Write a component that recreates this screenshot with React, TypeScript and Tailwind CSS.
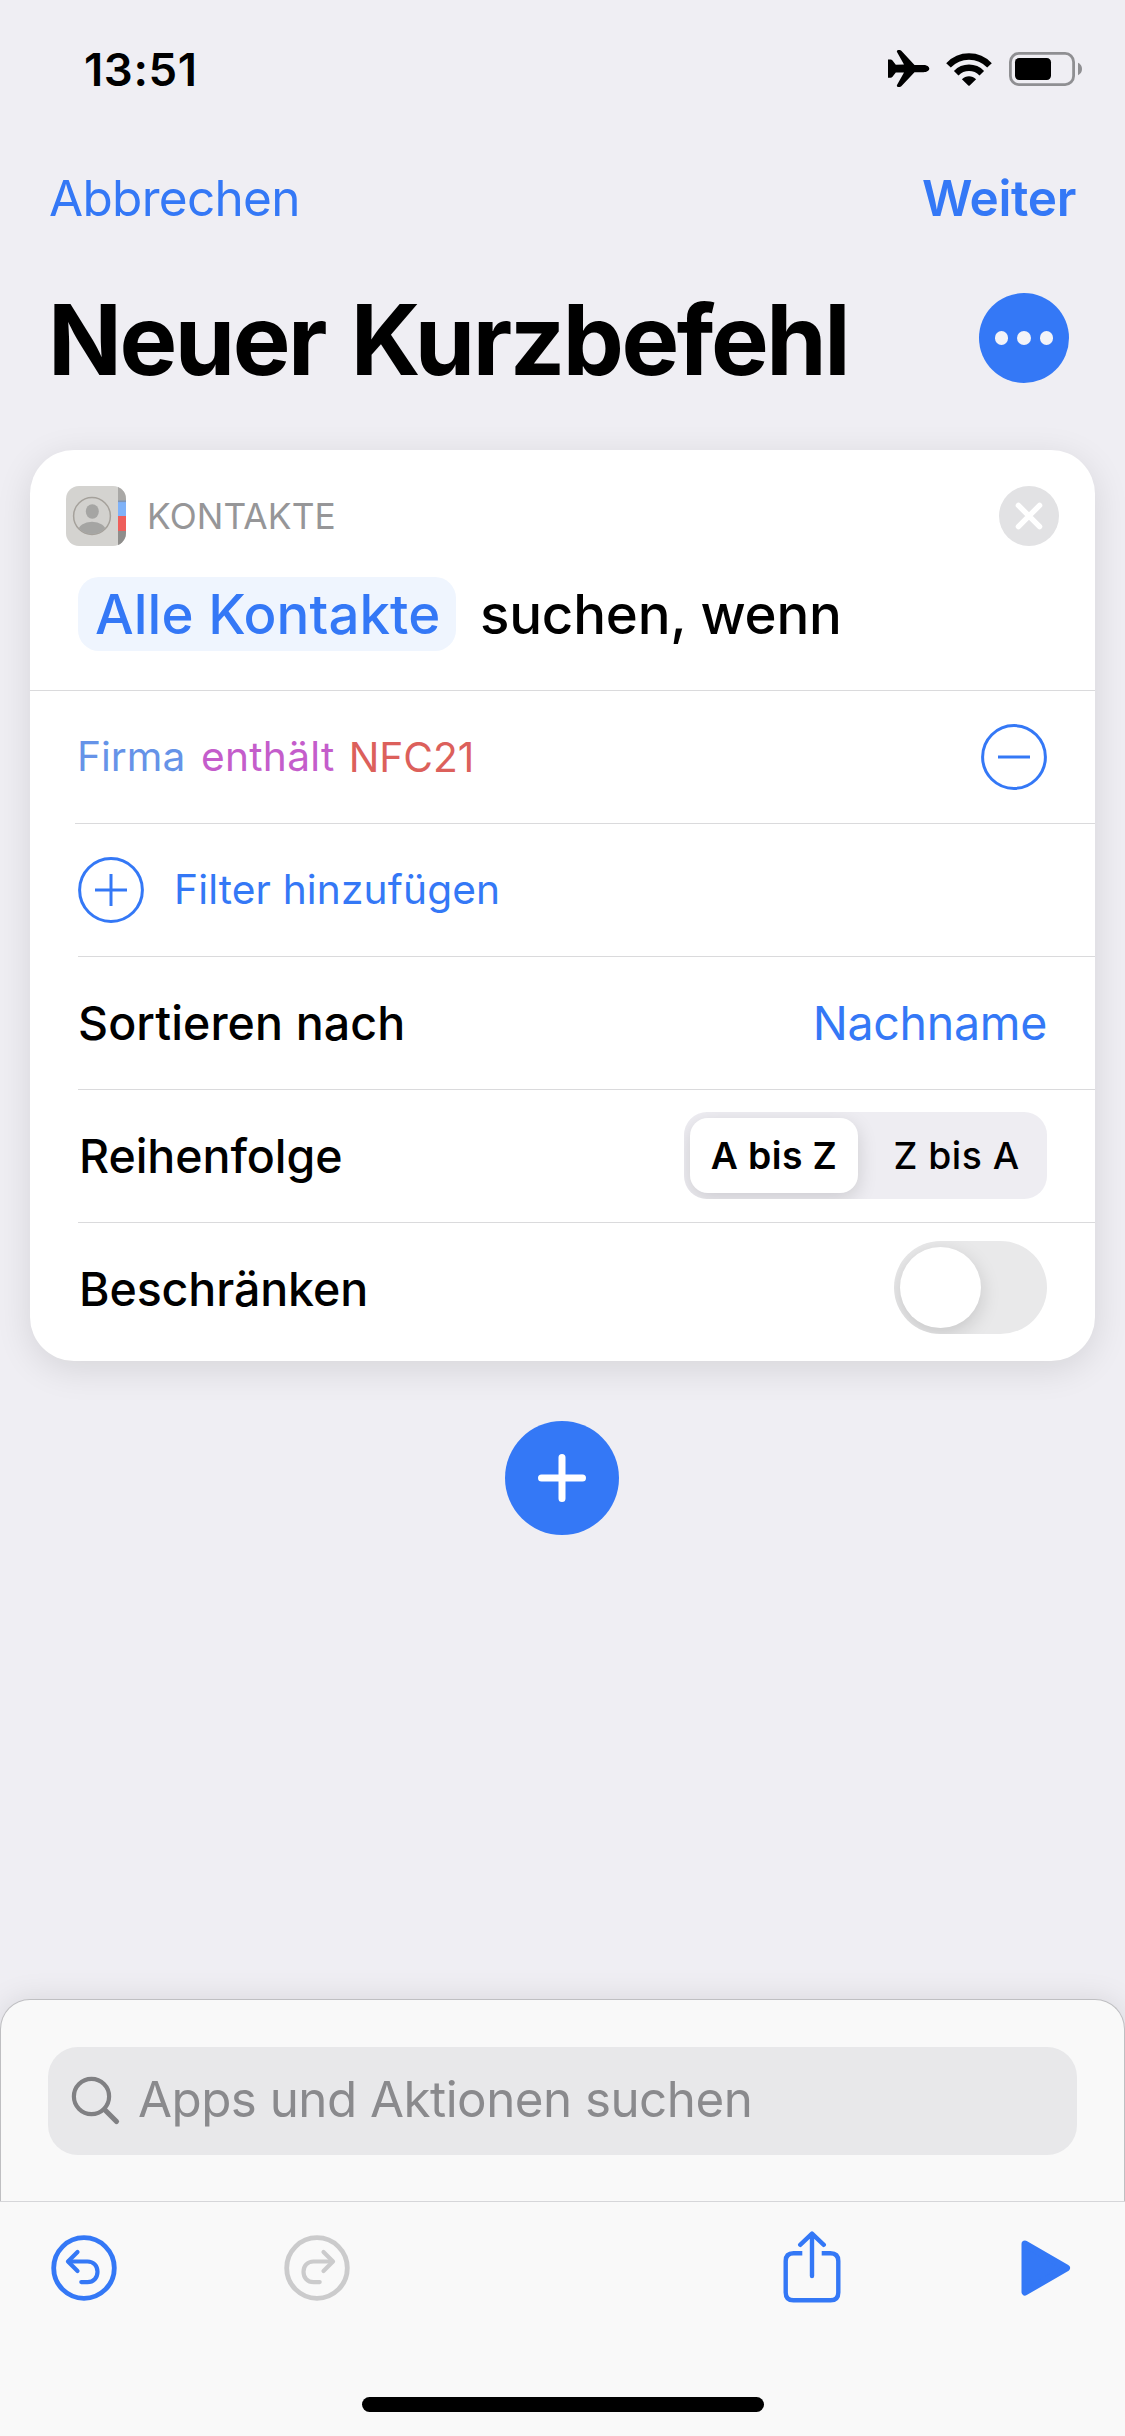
import type { ReactNode } from "react";

const BLUE = "#3478f6";

function AirplaneIcon() {
  return (
    <svg width="42" height="38" viewBox="0 0 42 38" fill="#000">
      <path d="M0 9.5 H2.6 C3.3 9.5 3.9 9.8 4.3 10.3 L7.8 14.8 L16 14.6 L9 2 C8.5 1 9.2 0 10.2 0 H11.5 C12.2 0 12.8 .3 13.3 .8 L26.5 14.9 H35.5 C39 14.9 41.3 16.6 41.3 18.6 C41.3 20.6 39 22.3 35.5 22.3 H26.5 L13.3 36.2 C12.8 36.8 12.2 37 11.5 37 H10.2 C9.2 37 8.5 36 9 35 L16 22.6 L7.8 22.4 L4.3 26.9 C3.9 27.4 3.3 27.7 2.6 27.7 H0 Z" />
    </svg>
  );
}

function WifiIcon() {
  return (
    <svg width="46" height="33" viewBox="0 0 46 33" fill="none" stroke="#000">
      <path d="M2.5 12.4 C13.8 .6 32.2 .6 43.5 12.4" strokeWidth="6.4" />
      <path d="M10.2 20.2 C17.3 13 28.7 13 35.8 20.2" strokeWidth="6.4" />
      <path d="M15.9 26.2 C19.8 22.3 26.2 22.3 30.1 26.2 L23.7 32.5 C23.3 32.9 22.7 32.9 22.3 32.5 Z" fill="#000" stroke="none" />
    </svg>
  );
}

function BatteryIcon() {
  return (
    <svg width="74" height="34" viewBox="0 0 74 34">
      <rect x="1.4" y="1.4" width="63.2" height="31.2" rx="8.5" fill="none" stroke="#8f8f92" strokeWidth="2.8" />
      <rect x="6" y="6" width="36" height="22" rx="4.2" fill="#000" />
      <path d="M69 10.8 C71.6 12 73 14.3 73 17 C73 19.7 71.6 22 69 23.2 Z" fill="#8f8f92" />
    </svg>
  );
}

function ContactsIcon() {
  return (
    <svg width="60" height="60" viewBox="0 0 60 60">
      <defs>
        <clipPath id="book">
          <rect width="60" height="60" rx="13" />
        </clipPath>
        <clipPath id="portrait">
          <circle cx="26" cy="30" r="18" />
        </clipPath>
      </defs>
      <g clipPath="url(#book)">
        <rect width="60" height="60" fill="#d4d3d0" />
        <rect x="52" width="8" height="15" fill="#a9a8a6" />
        <rect x="52" y="15" width="8" height="15.5" fill="#7fb2f8" />
        <rect x="52" y="14.5" width="8" height="1.6" fill="#7f95b5" />
        <rect x="52" y="30" width="8" height="15" fill="#ee5e5b" />
        <rect x="52" y="45" width="8" height="15" fill="#8f8e8c" />
        <circle cx="26" cy="30" r="18.4" fill="#d2d1ce" stroke="#a5a19b" strokeWidth="1.5" />
        <g clipPath="url(#portrait)" fill="#a5a5a3">
          <ellipse cx="26.3" cy="25.5" rx="6.5" ry="7.3" />
          <ellipse cx="26" cy="45.5" rx="14" ry="9.8" />
        </g>
      </g>
    </svg>
  );
}

function CircleGlyph({ plus }: { plus?: boolean }) {
  return (
    <svg width="66" height="66" viewBox="0 0 66 66" fill="none" stroke={BLUE} strokeWidth="3">
      <circle cx="33" cy="33" r="31.4" />
      <path d="M17 33 H49" />
      {plus && <path d="M33 17 V49" />}
    </svg>
  );
}

function HistoryIcon({ color, mirrored }: { color: string; mirrored?: boolean }) {
  return (
    <svg
      width="66"
      height="66"
      viewBox="0 0 66 66"
      fill="none"
      stroke={color}
      strokeLinecap="round"
      strokeLinejoin="round"
      className={mirrored ? "-scale-x-100" : ""}
    >
      <circle cx="33" cy="33" r="30.3" strokeWidth="4.8" />
      <path d="M26.5 17 L17 26.5 L26.5 36" strokeWidth="4.2" />
      <path d="M17.5 26.5 H36.5 C42.5 26.5 46.5 30.8 46.5 36.8 C46.5 42.8 42.5 47.1 36.5 47.1 H30.3" strokeWidth="4.2" />
    </svg>
  );
}

function Row({ children, inset = "ml-[48px]" }: { children: ReactNode; inset?: string }) {
  return <div className={`${inset} h-[133px] border-t border-[#dadadc]`}>{children}</div>;
}

export default function App() {
  return (
    <div className="flex h-[2436px] w-[1125px] flex-col overflow-hidden bg-[#efeef3] font-['Inter',sans-serif] leading-none text-black">
      <header className="flex h-[138px] items-center justify-between pr-[42px] pl-[84px]">
        <span className="pt-px text-[45.5px] font-semibold tracking-[0.6px]">13:51</span>
        <div className="flex items-center">
          <AirplaneIcon />
          <span className="ml-4 flex"><WifiIcon /></span>
          <span className="ml-[17px] flex"><BatteryIcon /></span>
        </div>
      </header>

      <nav className="flex h-[120px] items-center justify-between pt-px pr-[49px] pl-[49px] text-[49.5px] text-[#3478f6]">
        <button className="tracking-[-0.7px]">Abbrechen</button>
        <button className="font-semibold tracking-[-0.34px]">Weiter</button>
      </nav>

      <div className="flex h-[160px] items-center justify-between pr-[56px] pl-[48px]">
        <h1 className="pt-[2px] text-[97px] font-bold tracking-[-2.45px] [word-spacing:5px] whitespace-nowrap">Neuer Kurzbefehl</h1>
        <button className="flex size-[90px] items-center justify-center gap-[9px] rounded-full bg-[#3478f6]">
          <i className="size-[13.5px] rounded-full bg-[#f3f3f8]" />
          <i className="size-[13.5px] rounded-full bg-[#f3f3f8]" />
          <i className="size-[13.5px] rounded-full bg-[#f3f3f8]" />
        </button>
      </div>

      <section className="mx-[30px] mt-8 h-[911px] shrink-0 rounded-[44px] bg-white pt-9 shadow-[0_8px_36px_rgba(0,0,0,0.11)]">
        <div className="flex h-[60px] items-center px-9">
          <ContactsIcon />
          <span className="ml-[21px] pt-[2px] text-[35.3px] tracking-[0.12px] text-[#969698]">KONTAKTE</span>
          <button className="ml-auto flex size-[60px] items-center justify-center rounded-full bg-[#e2e2e4]">
            <svg width="30" height="30" viewBox="0 0 30 30" stroke="#fff" strokeWidth="5.4" strokeLinecap="round">
              <path d="M4.4 4.4 L25.6 25.6 M25.6 4.4 L4.4 25.6" />
            </svg>
          </button>
        </div>

        <div className="mt-[31px] mb-[39px] ml-[48px] flex h-[74px] items-center text-[54.6px] font-medium whitespace-nowrap">
          <span className="flex h-full w-[378px] items-center rounded-[21px] bg-[#eff5fe] pt-px pl-[17px] tracking-[0.06px] text-[#3478f6]">
            Alle Kontakte
          </span>
          <span className="ml-6 pt-px tracking-[-0.2px]">suchen, wenn</span>
        </div>

        <Row inset="pl-[48px]">
          <div className="flex h-[132px] items-center pr-[48px] text-[40.7px]">
            <span className="-ml-px pt-px text-[#6693e8]">Firma</span>
            <span className="ml-[15.6px] pt-px tracking-[0.28px] text-[#c45dcb]">enthält</span>
            <span className="ml-[14px] pt-[3px] text-[#dc605b]">NFC21</span>
            <span className="ml-auto"><CircleGlyph /></span>
          </div>
        </Row>
        <Row inset="ml-[45px] pl-[3px]">
          <div className="flex h-[132px] items-center text-[40.7px] text-[#3478f6]">
            <CircleGlyph plus />
            <span className="ml-[30px] tracking-[0.13px]">Filter hinzufügen</span>
          </div>
        </Row>
        <Row>
          <div className="flex h-[132px] items-center justify-between pr-[48px] text-[46.5px]">
            <span className="font-medium tracking-[0.11px]">Sortieren nach</span>
            <span className="tracking-[-0.3px] text-[#3478f6]">Nachname</span>
          </div>
        </Row>
        <Row>
          <div className="flex h-[132px] items-center justify-between pr-[48px]">
            <span className="pl-px text-[46.5px] font-medium tracking-[-0.05px]">Reihenfolge</span>
            <div className="mb-px flex h-[87px] w-[363px] overflow-hidden rounded-[23px] bg-[#eeedf2] p-[6px] text-[37.3px]">
              <span className="flex w-[168px] items-center justify-center rounded-[18px] bg-white font-semibold tracking-[0.41px] shadow-[0_6px_20px_rgba(0,0,0,0.14)]">
                A bis Z
              </span>
              <span className="flex flex-1 items-center justify-center pl-[14px] font-medium tracking-[0.48px]">Z bis A</span>
            </div>
          </div>
        </Row>
        <Row>
          <div className="flex h-[132px] items-center justify-between pr-[48px]">
            <span className="pl-px text-[46.5px] font-medium tracking-[-0.1px]">Beschränken</span>
            <span className="mb-[3px] flex h-[93px] w-[153px] items-center overflow-hidden rounded-full bg-[#e9e9ea] pl-[6px]">
              <i className="size-[81px] rounded-full bg-white shadow-[0_6px_20px_rgba(0,0,0,0.15)]" />
            </span>
          </div>
        </Row>
      </section>

      <button className="mt-[60px] mr-px flex size-[114px] shrink-0 items-center justify-center self-center rounded-full bg-[#3478f6]">
        <svg width="50" height="50" viewBox="0 0 50 50" stroke="#fff" strokeWidth="7" strokeLinecap="round">
          <path d="M4.5 25 H45.5 M25 4.5 V45.5" />
        </svg>
      </button>

      <footer className="mt-auto h-[437px] shrink-0">
        <div className="h-[202px] rounded-t-[30px] border border-b-0 border-[#bfbfc2] bg-[#f9f9f9] px-[47px] pt-[47px] shadow-[0_0_30px_rgba(0,0,0,0.1)]">
          <div className="flex h-[108px] items-center rounded-[30px] bg-[#e8e8ea] text-[#8a8a8d]">
            <svg className="ml-[23px]" width="50" height="50" viewBox="0 0 50 50" fill="none" stroke="#808083" strokeLinecap="round">
              <circle cx="20.5" cy="20.5" r="17.6" strokeWidth="4.2" />
              <path d="M33.5 33.5 L45.5 45.5" strokeWidth="5.2" />
            </svg>
            <span className="mb-[3px] ml-[17px] text-[49.3px] tracking-[-0.51px]">Apps und Aktionen suchen</span>
          </div>
        </div>
        <div className="flex h-[235px] flex-col border-t border-[#d6d6d9] bg-[#f9f9f9]">
          <div className="flex h-[133px] items-center pr-[54px] pb-px pl-[51px]">
            <HistoryIcon color={BLUE} />
            <span className="ml-[167px] flex"><HistoryIcon color="#cbcbcc" mirrored /></span>
            <svg className="mb-[3px] ml-auto" width="58" height="72" viewBox="0 0 58 72" fill="none" stroke={BLUE} strokeWidth="4.4">
              <path d="M19.3 22.2 H10.5 C5.5 22.2 2.7 25 2.7 30 V61.5 C2.7 66.5 5.5 69.3 10.5 69.3 H47.5 C52.5 69.3 55.3 66.5 55.3 61.5 V30 C55.3 25 52.5 22.2 47.5 22.2 H38.7" />
              <path d="M29 3 V45 M17.2 13.8 L29 2.6 L40.8 13.8" strokeLinecap="round" strokeLinejoin="round" />
            </svg>
            <svg className="ml-[180px]" width="50" height="56" viewBox="0 0 50 56" fill={BLUE} stroke={BLUE} strokeWidth="7" strokeLinejoin="round">
              <path d="M4 4 L45.5 28 L4 52 Z" />
            </svg>
          </div>
          <div className="mt-[62px] h-[15px] w-[402px] self-center rounded-full bg-black" />
        </div>
      </footer>
    </div>
  );
}
